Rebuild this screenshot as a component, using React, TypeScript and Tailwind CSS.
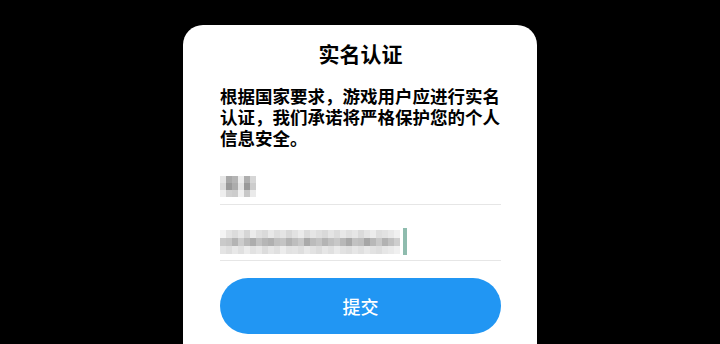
const nameCells = [
  ["#e6e6e6", "#a8a8a8", "#b4b4b4", "#ececec", "#aeaeae", "#d6d6d6"],
  ["#dcdcdc", "#999999", "#acacac", "#e4e4e4", "#9a9a9a", "#cccccc"],
  ["#eeeeee", "#d0d0d0", "#cccccc", "#f0f0f0", "#c8c8c8", "#eaeaea"],
]

const idCells = [
  [
    "#f4f4f4", "#e4e4e4", "#dcdcdc", "#e6e6e6", "#d6d6d6", "#ececec", "#e0e0e0", "#dadada",
    "#e8e8e8", "#dedede", "#e4e4e4", "#d8d8d8", "#e2e2e2", "#ebebeb", "#dcdcdc", "#e6e6e6",
    "#dfdfdf", "#d9d9d9", "#e4e4e4", "#dcdcdc", "#e8e8e8", "#e0e0e0", "#e6e6e6", "#dadada",
    "#e4e4e4", "#ececec", "#dedede", "#e2e2e2", "#e8e8e8", "#f0f0f0",
  ],
  [
    "#cacaca", "#c6c6c6", "#b4b4b4", "#cccccc", "#bababa", "#adadad", "#c2c2c2", "#b6b6b6",
    "#b0b0b0", "#c0c0c0", "#c4c4c4", "#b2b2b2", "#bebebe", "#c8c8c8", "#aaaaaa", "#bcbcbc",
    "#c4c4c4", "#b4b4b4", "#c0c0c0", "#c8c8c8", "#b8b8b8", "#a8a8a8", "#c2c2c2", "#bebebe",
    "#a6a6a6", "#b8b8b8", "#c8c8c8", "#b2b2b2", "#c0c0c0", "#cecece",
  ],
  [
    "#e4e4e4", "#dedede", "#e8e8e8", "#e0e0e0", "#ececec", "#e2e2e2", "#e8e8e8", "#dcdcdc",
    "#e6e6e6", "#e0e0e0", "#ececec", "#e2e2e2", "#e4e4e4", "#dedede", "#e8e8e8", "#e2e2e2",
    "#dcdcdc", "#e6e6e6", "#e0e0e0", "#eaeaea", "#e2e2e2", "#dedede", "#e6e6e6", "#e0e0e0",
    "#e8e8e8", "#e2e2e2", "#dedede", "#e6e6e6", "#eaeaea", "#f0f0f0",
  ],
]

const Mosaic = ({ rows, cellW, cellH }: { rows: string[][]; cellW: number; cellH: number }) => (
  <div className="flex flex-col blur-[0.6px]">
    {rows.map((row, i) => (
      <div key={i} className="flex">
        {row.map((c, j) => (
          <div key={j} style={{ width: cellW, height: cellH, backgroundColor: c }} />
        ))}
      </div>
    ))}
  </div>
)

export default function App() {
  return (
    <div
      className="w-[720px] h-[344px] bg-black overflow-hidden flex justify-center pt-[25px]"
      style={{ fontFamily: '"Noto Sans CJK SC", "Noto Sans", sans-serif' }}
    >
      <div className="w-[354px] h-[360px] bg-white rounded-[20px] pl-[37px] pr-[36px] pt-[14px] flex flex-col">
        <h1 className="text-center text-[21px] leading-[28px] font-bold text-black">实名认证</h1>

        <p className="mt-[18px] text-[17.5px] leading-[21px] font-bold text-black whitespace-nowrap">
          根据国家要求，游戏用户应进行实名
          <br />
          认证，我们承诺将严格保护您的个人
          <br />
          信息安全。
        </p>

        <div className="mt-[17px] h-[40px] border-b border-[#e6e6e6] flex items-center pt-[4px]">
          <Mosaic rows={nameCells} cellW={6} cellH={7} />
        </div>

        <div className="mt-[16px] h-[40px] border-b border-[#e6e6e6] flex items-center pt-[2px]">
          <Mosaic rows={idCells} cellW={6} cellH={8} />
          <div className="ml-[3px] w-[4px] h-[27px] bg-[#8fbcae] blur-[0.4px]" />
        </div>

        <button className="mt-[17px] h-[56px] w-full rounded-full bg-[#2196f3] text-white text-[18px] font-medium">
          提交
        </button>
      </div>
    </div>
  )
}
